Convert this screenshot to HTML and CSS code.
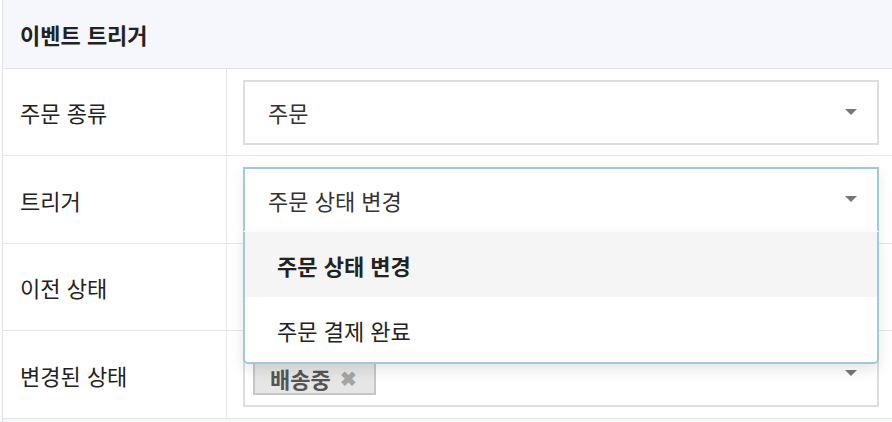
FILE: index.html
```html
<!DOCTYPE html>
<html lang="ko">
<head>
  <meta charset="UTF-8" />
  <meta name="viewport" content="width=device-width, initial-scale=1.0" />
  <title>이벤트 트리거</title>
  <link rel="stylesheet" href="styles.css">
</head>
<body>
  <table class="trigger-table">
    <thead>
      <tr>
        <th colspan="2">이벤트 트리거</th>
      </tr>
    </thead>
    <tbody>
      <tr>
        <td class="label">주문 종류</td>
        <td class="field">
          <div class="select">
            <span class="value">주문</span>
            <i class="arrow"></i>
          </div>
        </td>
      </tr>
      <tr>
        <td class="label">트리거</td>
        <td class="field">
          <div class="select open">
            <span class="value">주문 상태 변경</span>
            <i class="arrow"></i>
            <ul class="dropdown">
              <li class="option active">주문 상태 변경</li>
              <li class="option">주문 결제 완료</li>
            </ul>
          </div>
        </td>
      </tr>
      <tr>
        <td class="label">이전 상태</td>
        <td class="field">
          <div class="select">
            <span class="value"></span>
            <i class="arrow"></i>
          </div>
        </td>
      </tr>
      <tr>
        <td class="label">변경된 상태</td>
        <td class="field">
          <div class="select multi">
            <span class="tag">배송중 <span class="remove">&#10006;</span></span>
            <i class="arrow"></i>
          </div>
        </td>
      </tr>
    </tbody>
  </table>
  <div class="next-section"></div>
</body>
</html>
```

FILE: styles.css
```css
body {
  margin: 0 0 0 2px;
  font-family: "Noto Sans CJK KR", "Noto Sans", sans-serif;
  color: #222;
  background: #fff;
}
.trigger-table {
  width: 898px;
  border-collapse: collapse;
  border-left: 1px solid #e2e2e6;
}
.trigger-table th {
  height: 68px;
  padding: 0 0 0 17px;
  text-align: left;
  font-size: 22px;
  font-weight: bold;
  background: #f6f6fd;
  border-bottom: 1px solid #e2e2e8;
  box-sizing: border-box;
}
.trigger-table td {
  padding: 11px 21px 10.5px 16px;
  border-bottom: 1px solid #e6e6e6;
  vertical-align: middle;
}
.trigger-table td.label {
  width: 224px;
  box-sizing: border-box;
  padding-left: 17px;
  font-size: 22px;
  border-right: 1px solid #e6e6e6;
}
.select {
  position: relative;
  height: 65px;
  box-sizing: border-box;
  border: 2px solid #dedede;
  background: #fff;
  display: flex;
  align-items: center;
  padding-left: 23px;
  font-size: 22px;
  color: #333;
}
.select .arrow {
  position: absolute;
  right: 20px;
  top: 27px;
  width: 0;
  height: 0;
  border-left: 6px solid transparent;
  border-right: 6px solid transparent;
  border-top: 6px solid #777;
}
.select.open {
  border-color: #a2c8db;
  border-bottom-color: transparent;
  box-shadow: 0 4px 14px rgba(0, 0, 0, 0.08);
  z-index: 2;
}
.dropdown {
  position: absolute;
  top: 63px;
  left: -2px;
  right: -2px;
  margin: 0;
  padding: 0;
  list-style: none;
  background: #fff;
  border: 2px solid #a2c8db;
  border-top: none;
  border-radius: 0 0 5px 5px;
  box-shadow: 0 6px 14px rgba(0, 0, 0, 0.1);
}
.option {
  height: 65px;
  display: flex;
  align-items: center;
  padding-left: 32px;
  color: #222;
}
.option.active {
  background: #f5f5f5;
  font-weight: bold;
}
.select.multi {
  align-items: flex-start;
  padding-left: 8px;
}
.select.multi .arrow {
  top: 26px;
}
.tag {
  margin-top: 16px;
  height: 35px;
  box-sizing: border-box;
  display: inline-flex;
  align-items: center;
  padding: 0 17px 0 15px;
  background: #e6e6e6;
  border: 2px solid #c6c6c6;
  font-size: 22px;
  font-weight: bold;
  color: #555;
}
.tag .remove {
  margin-left: 9px;
  font-size: 20px;
  color: #a5a5a5;
}
.next-section {
  height: 60px;
  background: #f6f6fd;
  border-left: 1px solid #e2e2e6;
}
```
